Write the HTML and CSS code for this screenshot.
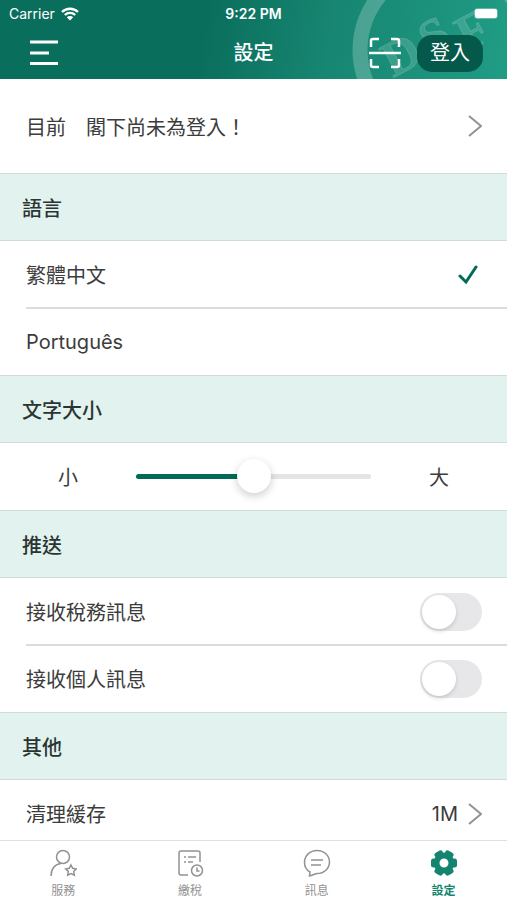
FILE: index.html
```html
<!DOCTYPE html>
<html lang="zh-Hant">
<head>
    <meta charset="UTF-8">
    <meta name="viewport" content="width=device-width, initial-scale=1.0">
    <title>設定</title>
    <link rel="stylesheet" href="styles.css">
</head>
<body>
    <header class="header">
        <svg class="header-mark" viewBox="0 0 160 79" aria-hidden="true">
            <circle class="mark-ring" cx="98" cy="50" r="85"/>
            <g class="mark-text">
                <text transform="translate(46 78) rotate(-28)" font-size="50">D</text>
                <text transform="translate(83 57) rotate(-28)" font-size="50">S</text>
                <text transform="translate(120 52) rotate(-28)" font-size="50">F</text>
            </g>
        </svg>
        <div class="status-bar">
            <span class="carrier">Carrier
                <svg width="18" height="14" viewBox="0 0 18 14" aria-hidden="true">
                    <path d="M1 5A11.500 11.500 0 0 1 17 5M3.800 8A7.500 7.500 0 0 1 14.200 8" fill="none" stroke="#fff" stroke-width="2.300"/>
                    <path d="M9 13.500L5.800 10.200A4.600 4.600 0 0 1 12.200 10.200Z" fill="#fff"/>
                </svg>
            </span>
            <span class="clock">9:22 PM</span>
            <span class="battery"><i class="battery-level"></i></span>
        </div>
        <div class="nav-bar">
            <button class="icon-btn menu-btn" aria-label="選單">
                <svg width="28" height="26" viewBox="0 0 28 26" fill="none" stroke="#fff" stroke-width="3">
                    <path d="M0 2H28M0 13H19M0 23.500H28"/>
                </svg>
            </button>
            <h1>設定</h1>
            <div class="nav-actions">
                <button class="icon-btn" aria-label="掃描">
                    <svg width="32" height="32" viewBox="0 0 32 32" fill="none" stroke="#fff" stroke-width="2.500">
                        <path d="M2 10V4Q2 2 4 2H10M22 2H28Q30 2 30 4V10M30 22V28Q30 30 28 30H22M10 30H4Q2 30 2 28V22M0 16H32"/>
                    </svg>
                </button>
                <button class="login-btn">登入</button>
            </div>
        </div>
    </header>

    <main class="settings">
        <a class="row account" href="#">
            <span>目前　閣下尚未為登入！</span>
            <svg class="arrow" viewBox="0 0 14 22"><path d="M1 1L13 11L1 21"/></svg>
        </a>

        <h2>語言</h2>
        <div class="group">
            <button class="row">
                <span>繁體中文</span>
                <svg class="check" viewBox="0 0 20 20"><path d="M2 11L8 17L18 2"/></svg>
            </button>
            <button class="row"><span>Português</span></button>
        </div>

        <h2>文字大小</h2>
        <div class="row size-row">
            <label for="fontSize">小</label>
            <input type="range" class="slider" id="fontSize" min="0" max="100" value="50">
            <span>大</span>
        </div>

        <h2>推送</h2>
        <div class="group">
            <div class="row">
                <label for="taxNews">接收稅務訊息</label>
                <input type="checkbox" class="switch" id="taxNews">
            </div>
            <div class="row">
                <label for="personalNews">接收個人訊息</label>
                <input type="checkbox" class="switch" id="personalNews">
            </div>
        </div>

        <h2>其他</h2>
        <a class="row" href="#">
            <span>清理緩存</span>
            <span class="value">1M
                <svg class="arrow" viewBox="0 0 14 22"><path d="M1 1L13 11L1 21"/></svg>
            </span>
        </a>
    </main>

    <nav class="tab-bar">
        <a class="tab" href="#">
            <svg viewBox="0 0 28 28">
                <circle cx="14" cy="8" r="6.500"/>
                <path d="M2 27C2 20 6 15 12 14.500"/>
                <path d="M22 16L23.700 19.300L27.300 19.900L24.700 22.500L25.300 26.200L22 24.500L18.700 26.200L19.300 22.500L16.700 19.900L20.300 19.300Z"/>
            </svg>
            服務
        </a>
        <a class="tab" href="#">
            <svg viewBox="0 0 28 28">
                <path d="M12 26H5Q3 26 3 24V4Q3 2 5 2H22Q24 2 24 4V13"/>
                <path d="M8 8H10M12 8H20M8 13H10M12 13H17"/>
                <circle cx="21" cy="21.500" r="5.500"/>
                <path d="M21 18.500V22H23.500"/>
            </svg>
            繳稅
        </a>
        <a class="tab" href="#">
            <svg viewBox="0 0 28 28">
                <path d="M7 23C3.500 21 1.500 17.500 1.500 13.500C1.500 6.500 7 1.500 14 1.500S26.500 6.500 26.500 13S21 24.500 14 24.500C11 25 9.500 26.500 6.500 27Z"/>
                <path d="M8 11H20M8 16H18"/>
            </svg>
            訊息
        </a>
        <a class="tab active" href="#">
            <svg viewBox="0 0 28 28">
                <circle class="gear-body" cx="14" cy="14" r="7.500"/>
                <path class="gear-teeth" d="M3.500 12V16M24.500 12V16M7 5.900L10.500 3.900M17.500 24.100L21 22.100M17.500 3.900L21 5.900M7 22.100L10.500 24.100"/>
            </svg>
            設定
        </a>
    </nav>
</body>
</html>
```
FILE: styles.css
```css
* {
    box-sizing: border-box;
}

body {
    margin: 0;
    height: 100vh;
    display: flex;
    flex-direction: column;
    background-color: #fff;
    color: #3c3c3c;
    font-family: Inter, "Noto Sans CJK TC", sans-serif;
    font-size: 20px;
}

button {
    border: none;
    background: none;
    padding: 0;
    font: inherit;
    color: inherit;
    cursor: pointer;
}

a {
    color: inherit;
    text-decoration: none;
}

svg {
    display: block;
    flex: none;
}

.header {
    position: relative;
    flex: none;
    overflow: hidden;
    color: #fff;
    background: linear-gradient(100deg, #0a6e5c 40%, #178672 65%, #209c85);
}

.header-mark {
    position: absolute;
    top: 0;
    right: 0;
    height: 100%;
}

.mark-ring {
    fill: none;
    stroke: #fff;
    stroke-opacity: 0.22;
    stroke-width: 15;
}

.mark-text {
    font-family: "Liberation Serif", serif;
    font-weight: bold;
    fill: rgba(255, 255, 255, 0.14);
    stroke: rgba(255, 255, 255, 0.14);
}

.status-bar,
.nav-bar {
    position: relative;
    display: grid;
    grid-template-columns: 1fr auto 1fr;
    align-items: center;
}

.status-bar {
    height: 27px;
    padding: 0 9px;
    font-size: 14px;
}

.carrier {
    display: flex;
    align-items: center;
    gap: 6px;
}

.clock {
    font-weight: 600;
}

.battery {
    justify-self: end;
    padding: 1px;
    border-radius: 4px;
    background-color: rgba(255, 255, 255, 0.3);
}

.battery-level {
    display: block;
    width: 22px;
    height: 9px;
    border-radius: 2px;
    background-color: #fff;
}

.nav-bar {
    height: 52px;
    padding: 0 24px;
}

.menu-btn {
    justify-self: start;
    padding: 0 6px;
}

.nav-bar h1 {
    margin: 0;
    font-size: 20px;
    font-weight: 500;
    line-height: 28px;
}

.nav-actions {
    display: flex;
    align-items: center;
    justify-content: flex-end;
    gap: 16px;
}

.login-btn {
    width: 66px;
    height: 37px;
    border-radius: 15px;
    background-color: #04594b;
    line-height: 28px;
}

.settings {
    flex: 1;
    min-height: 0;
    overflow-y: auto;
    scrollbar-width: none;
}

.row {
    display: flex;
    align-items: center;
    justify-content: space-between;
    width: 100%;
    height: 67px;
    padding: 0 25px 0 26px;
    text-align: left;
}

.row.account {
    height: 94px;
}

.settings h2 {
    display: flex;
    align-items: center;
    height: 68px;
    margin: 0;
    padding: 0 22px;
    border: solid #cfdcda;
    border-width: 1px 0;
    background-color: #e2f2ee;
    color: #2a3533;
    font-size: 20px;
    font-weight: 500;
}

.group {
    background: linear-gradient(#dcdcdc, #dcdcdc) 26px 66px / 100% 2px no-repeat;
}

.arrow {
    width: 14px;
    height: 22px;
    fill: none;
    stroke: #929292;
    stroke-width: 2;
}

.check {
    width: 20px;
    height: 20px;
    margin-right: 4px;
    fill: none;
    stroke: #006b56;
    stroke-width: 3;
    stroke-linecap: round;
}

.value {
    display: flex;
    align-items: center;
    gap: 10px;
}

.size-row {
    padding: 0 58px;
}

.slider {
    appearance: none;
    flex: 1;
    height: 34px;
    margin: 0 58px;
    background: none;
}

.slider::-webkit-slider-runnable-track {
    height: 5px;
    border-radius: 3px;
    background: linear-gradient(90deg, #006b56 50%, #e4e4e4 50%);
}

.slider::-webkit-slider-thumb {
    appearance: none;
    width: 34px;
    height: 34px;
    margin-top: -15px;
    border-radius: 50%;
    background-color: #fff;
    box-shadow: 0 3px 8px rgba(0, 0, 0, 0.2);
}

.switch {
    appearance: none;
    width: 62px;
    height: 38px;
    margin: 0;
    padding: 2px;
    border-radius: 19px;
    background-color: #e7e7e9;
}

.switch::before {
    content: "";
    display: block;
    width: 34px;
    height: 34px;
    border-radius: 50%;
    background-color: #fff;
    box-shadow: 0 2px 4px rgba(0, 0, 0, 0.15);
}

.switch:checked {
    background-color: #006b56;
}

.switch:checked::before {
    margin-left: 24px;
}

.tab-bar {
    display: grid;
    grid-template-columns: repeat(4, 1fr);
    flex: none;
    height: 60px;
    border-top: 1px solid #e0e0e0;
    background-color: #fff;
}

.tab {
    display: flex;
    flex-direction: column;
    align-items: center;
    gap: 5px;
    padding-top: 8px;
    color: #929292;
    font-size: 12px;
    line-height: 18px;
}

.tab svg {
    width: 28px;
    height: 28px;
    fill: none;
    stroke: currentColor;
    stroke-width: 1.5;
}

.tab.active {
    color: #128470;
    font-weight: 700;
}

.tab .gear-body {
    stroke-width: 6;
}

.tab .gear-teeth {
    stroke-width: 5;
    stroke-linecap: round;
}
```
